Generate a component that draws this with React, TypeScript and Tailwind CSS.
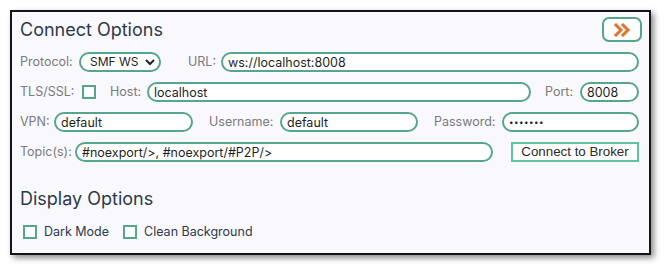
import React, { useState } from 'react';

const boxCls =
  'h-5 min-w-0 shrink-0 rounded-full border-2 border-[#55a68c] bg-white px-[5px] text-[#1f1f1f] outline-none';
const inputCls = `${boxCls} text-[12.5px]`;

function Label({ children, className = '' }: { children: React.ReactNode; className?: string }) {
  return <span className={`shrink-0 whitespace-nowrap text-[12.5px] leading-4 text-[#7b7b7b] ${className}`}>{children}</span>;
}

function Check({ checked, onChange }: { checked: boolean; onChange: (v: boolean) => void }) {
  return (
    <input
      type="checkbox"
      checked={checked}
      onChange={(e) => onChange(e.target.checked)}
      className="h-[14px] w-[14px] shrink-0 appearance-none border-2 border-[#55a68c] bg-white checked:bg-[#55a68c]"
    />
  );
}

export default function App() {
  const [protocol, setProtocol] = useState('SMF WS');
  const [tls, setTls] = useState(false);
  const [dark, setDark] = useState(false);
  const [clean, setClean] = useState(false);

  return (
    <div className="min-h-screen bg-white pl-[10px] pt-[10px] font-['Inter','Noto_Sans',sans-serif]">
      <div className="flex h-[245px] w-[641px] flex-col border-2 border-[#151515] bg-[#f8f8fd] pl-2 pr-[10px] shadow-[3px_3px_6px_rgba(0,0,0,0.45)]">
        {/* header */}
        <div className="flex h-[40px] shrink-0 items-start justify-between">
          <h2 className="mt-[6px] text-[18px] leading-6 text-[#2e3a4b]">Connect Options</h2>
          <button className="mt-[5px] mr-[-3px] flex h-[25px] w-[40px] items-center justify-center rounded-[7px] border-2 border-[#55a68c] bg-white">
            <svg width="18" height="14" viewBox="0 0 18 14" fill="none" stroke="#e5722c" strokeWidth="3" strokeLinecap="square">
              <polyline points="3,2 8,7 3,12" />
              <polyline points="10,2 15,7 10,12" />
            </svg>
          </button>
        </div>

        <div className="flex flex-col gap-[10px]">
          {/* row 1 */}
          <div className="flex h-5 items-center">
            <Label className="w-[59px]">Protocol:</Label>
            <div className="relative h-5 shrink-0">
              <select
                value={protocol}
                onChange={(e) => setProtocol(e.target.value)}
                className="block h-5 w-[82px] appearance-none rounded-full border-2 border-[#55a68c] bg-white pl-[9px] text-[12px] leading-4 text-[#1f1f1f] outline-none"
              >
                <option>SMF WS</option>
                <option>MQTT</option>
              </select>
              <svg className="pointer-events-none absolute right-[6px] top-[7px]" width="10" height="7" viewBox="0 0 10 7" fill="none" stroke="#222" strokeWidth="2">
                <polyline points="1,1 5,5 9,1" />
              </svg>
            </div>
            <Label className="ml-[27px] w-[33px]">URL:</Label>
            <input className={`${inputCls} flex-1`} defaultValue="ws://localhost:8008" />
          </div>

          {/* row 2 */}
          <div className="flex h-5 items-center">
            <Label className="w-[62px]">TLS/SSL:</Label>
            <Check checked={tls} onChange={setTls} />
            <Label className="ml-[14px] w-[37px]">Host:</Label>
            <input className={`${inputCls} flex-1`} defaultValue="localhost" />
            <Label className="ml-[14px] w-[35px]">Port:</Label>
            <input className={`${inputCls} w-[59px]`} defaultValue="8008" />
          </div>

          {/* row 3 */}
          <div className="flex h-5 items-center">
            <Label className="w-[34px]">VPN:</Label>
            <input className={`${inputCls} w-[139px]`} defaultValue="default" />
            <Label className="ml-[16px] w-[71px]">Username:</Label>
            <input className={`${inputCls} w-[138px]`} defaultValue="default" />
            <Label className="ml-[16px] w-[68px]">Password:</Label>
            <input
              type="password"
              className={`${boxCls} flex-1 text-[8px] tracking-[0.5px]`}
              defaultValue="default"
            />
          </div>

          {/* row 4 */}
          <div className="flex h-5 items-center">
            <Label className="w-[55px]">Topic(s):</Label>
            <input className={`${inputCls} w-[418px]`} defaultValue="#noexport/>, #noexport/#P2P/>" />
            <button className="ml-auto h-5 w-[128px] shrink-0 border-2 border-[#62c29c] bg-white font-['Liberation_Sans',Arial,sans-serif] text-[13.33px] leading-4 text-[#2b2b2b]">
              Connect to Broker
            </button>
          </div>
        </div>

        <h2 className="mt-[25px] text-[18px] leading-6 text-[#2e3a4b]">Display Options</h2>

        <div className="mt-[12px] flex items-center pl-[3px]">
          <Check checked={dark} onChange={setDark} />
          <span className="ml-[7px] text-[12.5px] text-[#2e3a4b]">Dark Mode</span>
          <span className="ml-[14px]" />
          <Check checked={clean} onChange={setClean} />
          <span className="ml-[7px] text-[12.5px] text-[#2e3a4b]">Clean Background</span>
        </div>
      </div>
    </div>
  );
}
